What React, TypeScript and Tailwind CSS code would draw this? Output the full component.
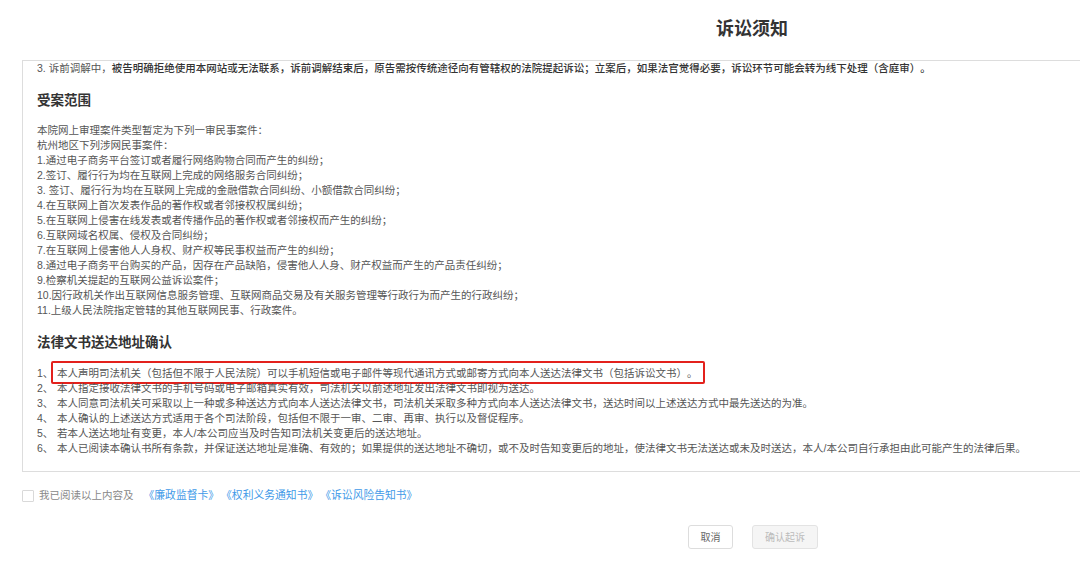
const caseLines = [
  '本院网上审理案件类型暂定为下列一审民事案件：',
  '杭州地区下列涉网民事案件：',
  '1.通过电子商务平台签订或者履行网络购物合同而产生的纠纷；',
  '2.签订、履行行为均在互联网上完成的网络服务合同纠纷；',
  '3. 签订、履行行为均在互联网上完成的金融借款合同纠纷、小额借款合同纠纷；',
  '4.在互联网上首次发表作品的著作权或者邻接权权属纠纷；',
  '5.在互联网上侵害在线发表或者传播作品的著作权或者邻接权而产生的纠纷；',
  '6.互联网域名权属、侵权及合同纠纷；',
  '7.在互联网上侵害他人人身权、财产权等民事权益而产生的纠纷；',
  '8.通过电子商务平台购买的产品，因存在产品缺陷，侵害他人人身、财产权益而产生的产品责任纠纷；',
  '9.检察机关提起的互联网公益诉讼案件；',
  '10.因行政机关作出互联网信息服务管理、互联网商品交易及有关服务管理等行政行为而产生的行政纠纷；',
  '11.上级人民法院指定管辖的其他互联网民事、行政案件。',
];

const addressLines = [
  '本人声明司法机关（包括但不限于人民法院）可以手机短信或电子邮件等现代通讯方式或邮寄方式向本人送达法律文书（包括诉讼文书）。',
  '本人指定接收法律文书的手机号码或电子邮箱真实有效，司法机关以前述地址发出法律文书即视为送达。',
  '本人同意司法机关可采取以上一种或多种送达方式向本人送达法律文书，司法机关采取多种方式向本人送达法律文书，送达时间以上述送达方式中最先送达的为准。',
  '本人确认的上述送达方式适用于各个司法阶段，包括但不限于一审、二审、再审、执行以及督促程序。',
  '若本人送达地址有变更，本人/本公司应当及时告知司法机关变更后的送达地址。',
  '本人已阅读本确认书所有条款，并保证送达地址是准确、有效的；如果提供的送达地址不确切，或不及时告知变更后的地址，使法律文书无法送达或未及时送达，本人/本公司自行承担由此可能产生的法律后果。',
];

export default function App() {
  return (
    <main className="h-[566px] w-[1080px] overflow-hidden bg-white font-['Liberation_Sans','Noto_Sans_CJK_SC',sans-serif] text-[10.5px] leading-[15px] text-[#555] [text-spacing-trim:space-all]">
      <header className="flex h-[60px] justify-center pl-[424px] pt-[18px]">
        <h1 className="text-[18px] font-bold leading-[22px] text-[#333]">诉讼须知</h1>
      </header>

      <section className="ml-[22px] h-[412px] border border-r-0 border-[#ddd] pl-[14px]">
        <p className="whitespace-nowrap">
          3. 诉前调解中，
          <span className="font-medium text-[#333]">
            被告明确拒绝使用本网站或无法联系，诉前调解结束后，原告需按传统途径向有管辖权的法院提起诉讼；立案后，如果法官觉得必要，诉讼环节可能会转为线下处理（含庭审）。
          </span>
        </p>

        <h2 className="mt-[15px] text-[13.5px] font-bold leading-[20px] text-[#333]">受案范围</h2>
        <div className="mt-[12px]">
          {caseLines.map((line) => (
            <p key={line} className="whitespace-nowrap">{line}</p>
          ))}
        </div>

        <h2 className="mt-[15px] text-[13.5px] font-bold leading-[20px] text-[#333]">法律文书送达地址确认</h2>
        <ol className="mt-[13px]">
          {addressLines.map((line, i) => (
            <li key={line} className="relative flex whitespace-nowrap">
              <span className="w-[20px] shrink-0">{i + 1}、</span>
              <span>{line}</span>
              {i === 0 && (
                <span className="absolute left-[14px] top-[-5px] h-[23px] w-[654px] rounded-[2px] border-2 border-[#e3211c]" />
              )}
            </li>
          ))}
        </ol>
      </section>

      <div className="ml-[22px] mt-[16px] flex items-center">
        <span className="h-[12px] w-[12px] rounded-[1px] border border-[#d9d9d9] bg-white" />
        <span className="ml-[5px] text-[#888]">我已阅读以上内容及</span>
        <div className="ml-[10px] flex gap-[2px] text-[10.8px] text-[#3f9ae8]">
          <span>《廉政监督卡》</span>
          <span>《权利义务通知书》</span>
          <span>《诉讼风险告知书》</span>
        </div>
      </div>

      <div className="mt-[22px] flex gap-[19px] pl-[688px] text-[10px]">
        <button type="button" className="h-[24px] w-[45px] rounded-[3px] border border-[#ddd] bg-white text-[#666]">
          取消
        </button>
        <button type="button" className="h-[24px] w-[66px] rounded-[3px] border border-[#e3e3e3] bg-[#f5f5f5] text-[#bbb]">
          确认起诉
        </button>
      </div>
    </main>
  );
}
